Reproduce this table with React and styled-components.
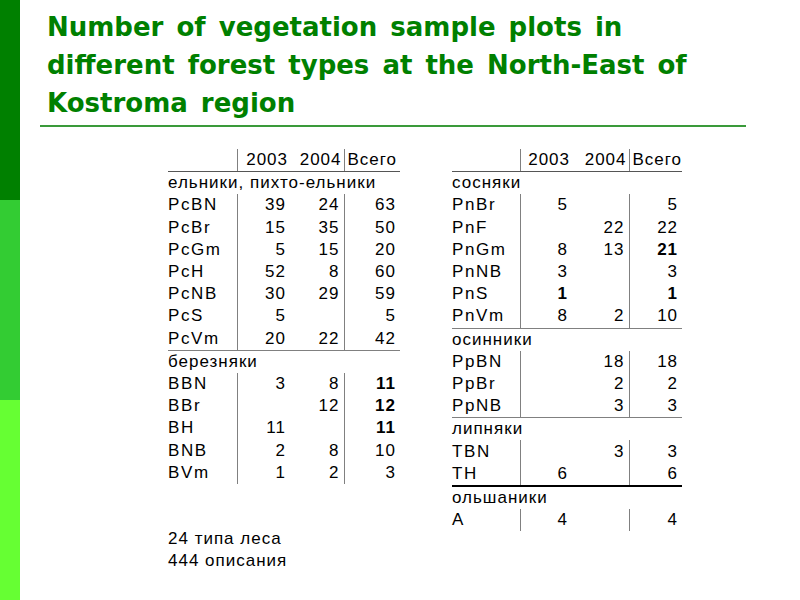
import styled, { createGlobalStyle } from 'styled-components'

const GlobalStyle = createGlobalStyle`
  html, body {
    margin: 0;
    padding: 0;
    background: #fff;
  }
`

const Slide = styled.div`
  width: 800px;
  height: 600px;
  display: flex;
  overflow: hidden;
  background: #fff;
`

const SideBar = styled.div`
  width: 20px;
  display: flex;
  flex-direction: column;
`

const SideBlock = styled.div`
  flex: 1;
  background: ${p => p.$color};
`

const Main = styled.div`
  flex: 1;
  display: flex;
  flex-direction: column;
`

const Title = styled.h1`
  margin: 0;
  padding: 8px 0 0 27px;
  font-family: "DejaVu Sans", "Verdana", sans-serif;
  font-weight: bold;
  font-size: 26px;
  word-spacing: 4px;
  line-height: 38px;
  color: #008000;
`

const TitleLine = styled.span`
  display: block;
  white-space: nowrap;
`

const Rule = styled.div`
  margin: 3px 0 0 20px;
  width: 706px;
  height: 2px;
  background: #3a9a3a;
`

const Tables = styled.div`
  display: flex;
  align-items: flex-start;
  gap: 52px;
  padding: 22px 0 0 148px;
`

const Column = styled.div`
  display: flex;
  flex-direction: column;
`

const Grid = styled.table`
  border-collapse: collapse;
  table-layout: fixed;
  font-family: "Liberation Sans", Arial, sans-serif;
  font-size: 17px;
  letter-spacing: 1px;
  color: #000;
`

const Cell = styled.td`
  height: 22.2px;
  line-height: 22px;
  padding: 0 ${p => p.$pad ?? 4}px 0 ${p => p.$padLeft ?? 0}px;
  white-space: nowrap;
  text-align: ${p => p.$align || 'right'};
  font-weight: ${p => (p.$bold ? 'bold' : 'normal')};
  border-left: ${p => (p.$sep ? '1px solid #808080' : 'none')};
  border-bottom: ${p => p.$rule || 'none'};
`

const LabelCell = styled(Cell)`
  letter-spacing: 1.6px;
`

const GroupCell = styled.td`
  height: 22.2px;
  line-height: 22px;
  padding: 0;
  white-space: nowrap;
  text-align: left;
`

const Note = styled.div`
  margin-top: 44px;
  font-family: "Liberation Sans", Arial, sans-serif;
  font-size: 17px;
  letter-spacing: 1px;
  line-height: 22.2px;
`

const b = v => ({ v, bold: true })

const leftTable = {
  widths: [69, 53, 54, 56],
  groups: [
    {
      name: 'ельники, пихто-ельники',
      rule: '1px solid #808080',
      rows: [
        ['PcBN', 39, 24, 63],
        ['PcBr', 15, 35, 50],
        ['PcGm', 5, 15, 20],
        ['PcH', 52, 8, 60],
        ['PcNB', 30, 29, 59],
        ['PcS', 5, '', 5],
        ['PcVm', 20, 22, 42],
      ],
    },
    {
      name: 'березняки',
      rows: [
        ['BBN', 3, 8, b(11)],
        ['BBr', '', 12, b(12)],
        ['BH', 11, '', b(11)],
        ['BNB', 2, 8, 10],
        ['BVm', 1, 2, 3],
      ],
    },
  ],
}

const rightTable = {
  widths: [68, 52, 57, 53],
  groups: [
    {
      name: 'сосняки',
      rule: '1px solid #808080',
      rows: [
        ['PnBr', 5, '', 5],
        ['PnF', '', 22, 22],
        ['PnGm', 8, 13, b(21)],
        ['PnNB', 3, '', 3],
        ['PnS', b(1), '', b(1)],
        ['PnVm', 8, 2, 10],
      ],
    },
    {
      name: 'осинники',
      rule: '1px solid #808080',
      rows: [
        ['PpBN', '', 18, 18],
        ['PpBr', '', 2, 2],
        ['PpNB', '', 3, 3],
      ],
    },
    {
      name: 'липняки',
      rule: '2px solid #000',
      rows: [
        ['TBN', '', 3, 3],
        ['TH', 6, '', 6],
      ],
    },
    {
      name: 'ольшаники',
      rows: [['A', 4, '', 4]],
    },
  ],
}

const val = x => (x && typeof x === 'object' ? x : { v: x, bold: false })

const DataTable = ({ table }) => {
  const head = '1px solid #555'
  return (
    <Grid>
      <colgroup>
        {table.widths.map((w, i) => (
          <col key={i} style={{ width: w }} />
        ))}
      </colgroup>
      <tbody>
        <tr>
          <Cell $rule={head} />
          <Cell $sep $rule={head} $pad={2}>2003</Cell>
          <Cell $rule={head} $pad={2}>2004</Cell>
          <Cell $sep $rule={head} $align="left" $padLeft={3} $pad={0}>Всего</Cell>
        </tr>
        {table.groups.map(g => [
          <tr key={g.name}>
            <GroupCell colSpan={4}>{g.name}</GroupCell>
          </tr>,
          ...g.rows.map((r, i) => {
            const rule = i === g.rows.length - 1 ? g.rule : undefined
            const [c1, c2, c3] = r.slice(1).map(val)
            return (
              <tr key={r[0]}>
                <LabelCell $align="left" $pad={0} $rule={rule}>{r[0]}</LabelCell>
                <Cell $sep $bold={c1.bold} $rule={rule}>{c1.v}</Cell>
                <Cell $bold={c2.bold} $rule={rule}>{c2.v}</Cell>
                <Cell $sep $bold={c3.bold} $rule={rule}>{c3.v}</Cell>
              </tr>
            )
          }),
        ])}
      </tbody>
    </Grid>
  )
}

export default function App() {
  return (
    <Slide>
      <GlobalStyle />
      <SideBar>
        <SideBlock $color="#008000" />
        <SideBlock $color="#33cc33" />
        <SideBlock $color="#66ff33" />
      </SideBar>
      <Main>
        <Title>
          <TitleLine>Number of vegetation sample plots in</TitleLine>
          <TitleLine>different forest types at the North-East of</TitleLine>
          <TitleLine>Kostroma region</TitleLine>
        </Title>
        <Rule />
        <Tables>
          <Column>
            <DataTable table={leftTable} />
            <Note>
              24 типа леса
              <br />
              444 описания
            </Note>
          </Column>
          <Column>
            <DataTable table={rightTable} />
          </Column>
        </Tables>
      </Main>
    </Slide>
  )
}
